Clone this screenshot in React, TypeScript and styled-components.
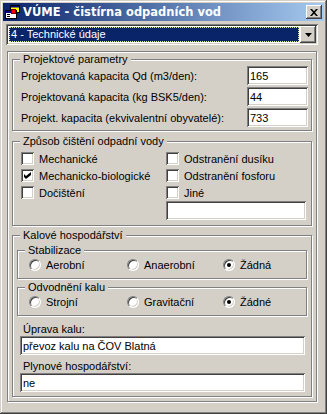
import React from 'react';
import styled, { createGlobalStyle } from 'styled-components';

const FACE = '#d4d0c8';

const GlobalStyle = createGlobalStyle`
  html, body {
    margin: 0;
    padding: 0;
    background: ${FACE};
  }

  body {
    font-family: "Liberation Sans", Arial, sans-serif;
    font-size: 11px;
    color: #000;
  }

  * {
    box-sizing: border-box;
  }
`;

const AppIcon = () => (
  <svg width="16" height="16" viewBox="0 0 16 16">
    <rect x="5.5" y="1.5" width="9" height="7" fill="#ffff00" stroke="#000" />
    <rect x="6" y="2" width="8" height="1.5" fill="#000080" />
    <rect x="0.5" y="6.5" width="11" height="8" fill="#fff" stroke="#000" />
    <rect x="1" y="7" width="10" height="2" fill="#000080" />
    <rect x="2" y="10" width="3" height="1" fill="#000" />
    <rect x="2" y="12" width="3" height="1" fill="#000" />
    <rect x="6.5" y="5.5" width="4" height="4" fill="#ff0000" stroke="#800000" />
  </svg>
);

const CloseGlyph = () => (
  <svg width="8" height="7" viewBox="0 0 8 7">
    <path d="M0 0h2l2 2.3L6 0h2L5 3.5 8 7H6L4 4.7 2 7H0l3-3.5z" fill="#000" />
  </svg>
);

const ArrowGlyph = () => (
  <svg width="7" height="4" viewBox="0 0 7 4">
    <path d="M0 0h7L3.5 4z" fill="#000" />
  </svg>
);

const CheckGlyph = () => (
  <svg width="7" height="7" viewBox="0 0 7 7">
    <path d="M0 2l2 2 5-4v3l-5 4-2-2z" fill="#000" />
  </svg>
);

interface CheckProps {
  label: string,
  checked?: boolean
}

const Check: React.FC<CheckProps> = ({ label, checked }) => (
  <CheckItem>
    <CheckBox>{checked && <CheckGlyph />}</CheckBox>
    <span>{label}</span>
  </CheckItem>
);

interface RadioProps {
  label: string,
  checked?: boolean
}

const Radio: React.FC<RadioProps> = ({ label, checked }) => (
  <RadioItem>
    <RadioCircle $checked={checked} />
    <span>{label}</span>
  </RadioItem>
);

const App: React.FC = () => (
  <>
    <GlobalStyle />
    <Window>
      <TitleBar>
        <AppIcon />
        <TitleText>VÚME - čistírna odpadních vod</TitleText>
        <CloseButton>
          <CloseGlyph />
        </CloseButton>
      </TitleBar>

      <Combo>
        <ComboValue>4 - Technické údaje</ComboValue>
        <ComboButton>
          <ArrowGlyph />
        </ComboButton>
      </Combo>

      <Panel>
        <ParamsGroup>
          <Caption>Projektové parametry</Caption>
          <ParamRow>
            <span>Projektovaná kapacita Qd (m3/den):</span>
            <TextBox $width={61} readOnly value="165" />
          </ParamRow>
          <ParamRow>
            <span>Projektovaná kapacita (kg BSK5/den):</span>
            <TextBox $width={61} readOnly value="44" />
          </ParamRow>
          <ParamRow>
            <span>Projekt. kapacita (ekvivalentní obyvatelé):</span>
            <TextBox $width={61} readOnly value="733" />
          </ParamRow>
        </ParamsGroup>

        <CleaningGroup>
          <Caption>Způsob čištění odpadní vody</Caption>
          <CheckGrid>
            <Check label="Mechanické" />
            <Check label="Odstranění dusíku" />
            <Check label="Mechanicko-biologické" checked />
            <Check label="Odstranění fosforu" />
            <Check label="Dočištění" />
            <Check label="Jiné" />
            <OtherBox $width={140} readOnly value="" />
          </CheckGrid>
        </CleaningGroup>

        <SludgeGroup>
          <Caption>Kalové hospodářství</Caption>
          <RadioGroup>
            <Caption>Stabilizace</Caption>
            <Radio label="Aerobní" />
            <Radio label="Anaerobní" />
            <Radio label="Žádná" checked />
          </RadioGroup>
          <RadioGroup>
            <Caption>Odvodnění kalu</Caption>
            <Radio label="Strojní" />
            <Radio label="Gravitační" />
            <Radio label="Žádné" checked />
          </RadioGroup>
          <FieldLabel>Úprava kalu:</FieldLabel>
          <WideBox readOnly value="převoz kalu na ČOV Blatná" />
          <FieldLabel>Plynové hospodářství:</FieldLabel>
          <WideBox readOnly value="ne" />
        </SludgeGroup>
      </Panel>
    </Window>
  </>
);

const sunken = `
  box-shadow: inset 1px 1px #808080, inset -1px -1px #fff,
    inset 2px 2px #404040, inset -2px -2px ${FACE};
`;

const raised = `
  box-shadow: inset -1px -1px #404040, inset 1px 1px #fff,
    inset -2px -2px #808080, inset 2px 2px ${FACE};
`;

const etched = `
  border: 1px solid #808080;
  box-shadow: inset 1px 1px #fff, 1px 1px #fff;
`;

const Window = styled.div`
  display: flex;
  flex-direction: column;
  width: 327px;
  height: 414px;
  padding: 3px;
  background: ${FACE};
  box-shadow: inset -1px -1px #404040, inset 1px 1px ${FACE},
    inset -2px -2px #808080, inset 2px 2px #fff;
`;

const TitleBar = styled.div`
  display: flex;
  align-items: center;
  height: 18px;
  padding: 0 2px;
  background: linear-gradient(to right, #0a246a, #a6caf0);
`;

const TitleText = styled.span`
  flex: 1;
  margin-left: 2px;
  color: #fff;
  font-family: "DejaVu Sans", Verdana, sans-serif;
  font-weight: 700;
  font-size: 11.5px;
  white-space: nowrap;
`;

const CloseButton = styled.div`
  display: flex;
  align-items: center;
  justify-content: center;
  width: 16px;
  height: 14px;
  background: ${FACE};
  ${raised}
`;

const Combo = styled.div`
  display: flex;
  width: 312px;
  height: 21px;
  margin: 3px 0 0 3px;
  padding: 2px;
  background: #fff;
  ${sunken}
`;

const ComboValue = styled.div`
  flex: 1;
  margin: 1px;
  padding-left: 2px;
  line-height: 15px;
  color: #fff;
  background: #0a246a;
  outline: 1px dotted #e8e8a0;
  outline-offset: -1px;
`;

const ComboButton = styled.div`
  display: flex;
  align-items: center;
  justify-content: center;
  width: 16px;
  height: 17px;
  background: ${FACE};
  ${raised}
`;

const Panel = styled.div`
  display: flex;
  flex-direction: column;
  width: 310px;
  height: 351px;
  margin: 6px 0 0 4px;
  padding: 7px 4px 4px;
  ${etched}
`;

const GroupBox = styled.div`
  position: relative;
  ${etched}
`;

const Caption = styled.span`
  position: absolute;
  top: -7px;
  left: 7px;
  padding: 0 3px;
  line-height: 13px;
  background: ${FACE};
  white-space: nowrap;
`;

const ParamsGroup = styled(GroupBox)`
  display: flex;
  flex-direction: column;
  gap: 2px;
  height: 72px;
  padding: 6px 3px 0 8px;
`;

const ParamRow = styled.div`
  display: flex;
  align-items: center;
  justify-content: space-between;
  height: 19px;
`;

const TextBox = styled.input<{ $width?: number }>`
  width: ${({ $width }) => ($width ? `${$width}px` : '100%')};
  height: 19px;
  margin: 0;
  padding: 0 3px;
  border: 0;
  outline: none;
  font: inherit;
  color: #000;
  background: #fff;
  ${sunken}
`;

const CleaningGroup = styled(GroupBox)`
  height: 85px;
  margin-top: 10px;
  padding: 8px 0 0 8px;
`;

const CheckGrid = styled.div`
  display: grid;
  grid-template-columns: 145px 1fr;
  grid-template-rows: repeat(3, 17px) 19px;
`;

const CheckItem = styled.label`
  display: flex;
  align-items: center;
  gap: 5px;
  white-space: nowrap;
`;

const CheckBox = styled.span`
  display: flex;
  align-items: center;
  justify-content: center;
  width: 13px;
  height: 13px;
  background: #fff;
  ${sunken}
`;

const OtherBox = styled(TextBox)`
  grid-column: 2;
`;

const SludgeGroup = styled(GroupBox)`
  display: flex;
  flex-direction: column;
  height: 162px;
  margin-top: 9px;
  padding-top: 14px;
`;

const RadioGroup = styled(GroupBox)`
  display: grid;
  grid-template-columns: 98px 96px 1fr;
  align-items: center;
  flex: none;
  height: 29px;
  margin: 0 4px;
  padding-left: 11px;

  & + & {
    margin-top: 8px;
  }
`;

const RadioItem = styled.label`
  display: flex;
  align-items: center;
  gap: 5px;
`;

const RadioCircle = styled.span<{ $checked?: boolean }>`
  display: flex;
  align-items: center;
  justify-content: center;
  width: 12px;
  height: 12px;
  border: 1px solid;
  border-color: #808080 #fff #fff #808080;
  border-radius: 50%;
  background: #fff;
  box-shadow: inset 1px 1px #404040, inset -1px -1px ${FACE};

  &::after {
    content: '';
    display: ${({ $checked }) => ($checked ? 'block' : 'none')};
    width: 4px;
    height: 4px;
    border-radius: 50%;
    background: #000;
  }
`;

const FieldLabel = styled.div`
  margin-top: 7px;
  padding-left: 10px;
  line-height: 13px;

  & + input + & {
    margin-top: 5px;
  }
`;

const WideBox = styled(TextBox)`
  flex: none;
  width: 285px;
  margin-left: 7px;
`;

export default App;
